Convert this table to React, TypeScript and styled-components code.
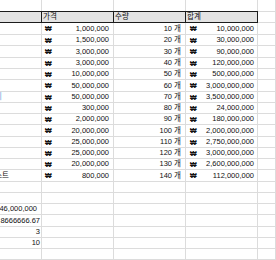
import React from "react";
import styled, { createGlobalStyle } from "styled-components";

const GlobalStyle = createGlobalStyle`
  html, body {
    margin: 0;
    padding: 0;
    background: #ffffff;
    overflow: hidden;
  }
  body {
    font-family: "Liberation Sans", "Noto Sans CJK KR", sans-serif;
    font-size: 7.5px;
    color: #111111;
  }
`;

const GRID = "#dcdcdc";
const DARK = "#1c1c1c";
const COLS = "42px 72px 72px 72px 1fr";

const Sheet = styled.div`
  display: flex;
  flex-direction: column;
  width: 276px;
  height: 260px;
  overflow: hidden;
`;

const Row = styled.div<{ $h: number }>`
  display: grid;
  grid-template-columns: ${COLS};
  height: ${(p) => p.$h}px;
  flex: none;
`;

const Cell = styled.div<{ $bottom?: boolean; $align?: "left" | "right"; $pr?: number }>`
  box-sizing: border-box;
  display: flex;
  align-items: center;
  justify-content: ${(p) => (p.$align === "right" ? "flex-end" : "flex-start")};
  padding-right: ${(p) => p.$pr ?? 0}px;
  border-right: 1px solid ${GRID};
  border-bottom: ${(p) => (p.$bottom === false ? "none" : `1px solid ${GRID}`)};
  overflow: hidden;
  white-space: nowrap;
  line-height: 1;
`;

const HeaderRow = styled(Row)`
  box-sizing: border-box;
`;

const HeaderCell = styled.div<{ $plain?: boolean }>`
  box-sizing: border-box;
  display: flex;
  align-items: center;
  padding-left: 1px;
  background: ${(p) => (p.$plain ? "#ffffff" : "#e3e3e3")};
  border-top: 1px solid ${(p) => (p.$plain ? GRID : DARK)};
  border-bottom: 1px solid ${(p) => (p.$plain ? GRID : DARK)};
  border-right: 1px solid ${(p) => (p.$plain ? GRID : DARK)};
  line-height: 1;
  white-space: nowrap;
`;

const Money = styled.div<{ $pl: number; $pr: number }>`
  box-sizing: border-box;
  display: flex;
  align-items: center;
  justify-content: space-between;
  padding: 0 ${(p) => p.$pr}px 0 ${(p) => p.$pl}px;
  border-right: 1px solid ${GRID};
  border-bottom: 1px solid ${GRID};
  line-height: 1;
  white-space: nowrap;
`;

const Won = styled.span`
  font-weight: bold;
  font-size: 7px;
`;

const Link = styled.span`
  color: #5aa2e0;
`;

type Item = { price: string; qty: number; total: string; name?: React.ReactNode; namePad?: number };

const items: Item[] = [
  { price: "1,000,000", qty: 10, total: "10,000,000" },
  { price: "1,500,000", qty: 20, total: "30,000,000" },
  { price: "3,000,000", qty: 30, total: "90,000,000" },
  { price: "3,000,000", qty: 40, total: "120,000,000" },
  { price: "10,000,000", qty: 50, total: "500,000,000" },
  { price: "50,000,000", qty: 60, total: "3,000,000,000" },
  { price: "50,000,000", qty: 70, total: "3,500,000,000", name: <Link>보기</Link>, namePad: 39 },
  { price: "300,000", qty: 80, total: "24,000,000" },
  { price: "2,000,000", qty: 90, total: "180,000,000" },
  { price: "20,000,000", qty: 100, total: "2,000,000,000" },
  { price: "25,000,000", qty: 110, total: "2,750,000,000" },
  { price: "25,000,000", qty: 120, total: "3,000,000,000" },
  { price: "20,000,000", qty: 130, total: "2,600,000,000" },
  { price: "800,000", qty: 140, total: "112,000,000", name: "테스트", namePad: 32 },
];

const itemHeights = [12, 11, 12, 11, 11, 12, 11, 11, 11, 12, 11, 11, 11, 12];

const stats: { h: number; value?: string; pr?: number }[] = [
  { h: 11 },
  { h: 11 },
  { h: 11, value: "46,000,000", pr: 4 },
  { h: 12, value: "8666666.67", pr: 1 },
  { h: 11, value: "3", pr: 1 },
  { h: 11, value: "10", pr: 1 },
  { h: 11 },
  { h: 11 },
];

const Blank = () => (
  <>
    <Cell />
    <Cell />
    <Cell />
    <Cell />
  </>
);

export default function App() {
  return (
    <>
      <GlobalStyle />
      <Sheet>
        <Row $h={11}>
          <Cell $bottom={false} />
          <Cell $bottom={false} />
          <Cell $bottom={false} />
          <Cell $bottom={false} />
          <Cell $bottom={false} />
        </Row>
        <HeaderRow $h={12}>
          <HeaderCell />
          <HeaderCell>가격</HeaderCell>
          <HeaderCell>수량</HeaderCell>
          <HeaderCell>합계</HeaderCell>
          <HeaderCell $plain />
        </HeaderRow>
        {items.map((it, i) => (
          <Row key={i} $h={itemHeights[i]}>
            <Cell $align="right" $pr={it.namePad}>
              {it.name}
            </Cell>
            <Money $pl={3} $pr={4}>
              <Won>₩</Won>
              <span>{it.price}</span>
            </Money>
            <Cell $align="right" $pr={4}>
              {it.qty} 개
            </Cell>
            <Money $pl={4} $pr={3}>
              <Won>₩</Won>
              <span>{it.total}</span>
            </Money>
            <Cell />
          </Row>
        ))}
        {stats.map((s, i) => (
          <Row key={`s${i}`} $h={s.h}>
            <Cell $align="right" $pr={s.pr}>
              {s.value}
            </Cell>
            <Blank />
          </Row>
        ))}
      </Sheet>
    </>
  );
}
